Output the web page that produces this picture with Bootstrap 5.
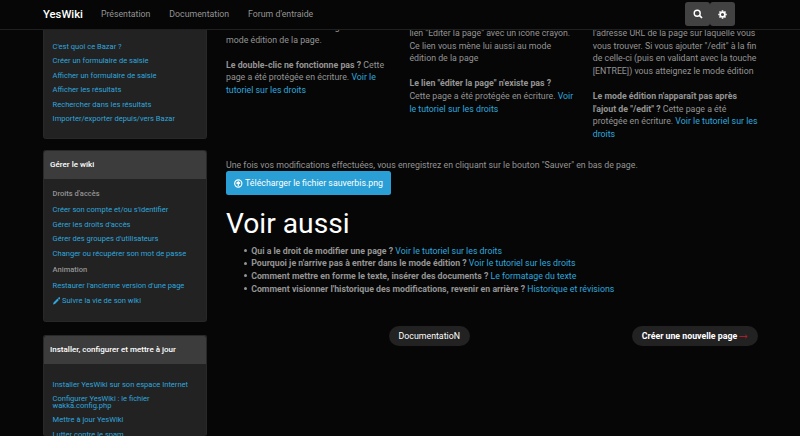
<!DOCTYPE html>
<html lang="fr" data-bs-theme="dark">
<head>
<meta charset="utf-8">
<meta name="viewport" content="width=device-width, initial-scale=1">
<title>YesWiki</title>
<link href="https://cdn.jsdelivr.net/npm/bootstrap@5.3.0/dist/css/bootstrap.min.css" rel="stylesheet">
<style>
html,body{height:100%;overflow:hidden}
body{background:#060606;color:#949494;font-family:Roboto,"Liberation Sans",sans-serif;font-size:8.79px;line-height:12.56px}
a{color:#2fa6dd;text-decoration:none}
p{margin:0 0 12.56px;white-space:nowrap}
.topbar{height:30px;background:#060606;border-bottom:1px solid #202020;padding:0 0 1px 43px;--bs-navbar-padding-y:0}
.topbar .navbar-brand{font-size:11.3px;font-weight:500;line-height:14px;color:#fff;margin:0;padding:1px 0 0;width:57.9px}
.topbar .navbar-nav{gap:19px}
.topbar .navbar-nav .nav-link{padding:0;color:#949494;line-height:14px;font-size:8.75px}
.tools{position:absolute;left:685px;top:2px}
.tools .btn{width:25px;height:24px;padding:0;background:#424242;border:0;border-radius:3px}
.page{height:436px;overflow:hidden;padding-left:43px}
.side{width:164.4px;flex:none}
.box{background:#222;border:1px solid #282828;border-radius:2.5px;line-height:7.2px;font-size:7.54px;flex:none}
.box-bazar{height:139px;margin-bottom:11px}
.box-wiki{height:172px;margin-bottom:13px}
.box-install{height:101px;border-bottom:0;overflow:hidden}
.box .card-header{background:#3c3c3c;border:0;color:#fff;height:28px;padding:0 6px;font-size:8.02px;font-weight:500;border-radius:2px 2px 0 0;flex:none}
.box .card-body{padding:0 8.6px;white-space:nowrap}
.box-bazar .card-body{padding-top:42px}
.box-wiki .card-body{padding-top:11.4px}
.box-install .card-body{padding-top:16.5px}
.box a{display:block;margin-bottom:7.2px}
.box h6{font-size:7.54px;line-height:8px;color:#949494;font-weight:500;margin:0}
.box .second{padding-top:2px}
.box .feed{margin-top:8px}
.main{width:532px;margin-left:18.6px;padding-top:27.2px;flex:none}
.ways{height:131.4px}
.way{width:183.4px;flex:none}
.way-first{margin-top:-6.2px}
.voir{font-size:28.2px;font-weight:400;line-height:34px;color:#fff;margin:11.6px 0 0}
.dl,.dl:hover{background:#2a9fd6;color:#fff}
.dl{font-size:8.79px;line-height:12.56px;width:165px;height:24px;padding:0 8px;border:0;border-radius:2.5px;white-space:nowrap;gap:2.5px}
.links{margin:4.2px 0 0;padding-left:17.6px;white-space:nowrap;list-style:none}
.links li::before{content:"";display:inline-block;width:3px;height:3px;border-radius:50%;background:#949494;margin-right:4.6px;vertical-align:1.6px}
.pager{margin:30.4px 0 0 163px}
.pill{background:#222;color:#fff;height:20.4px;padding:1px 9.6px 0;font-size:8.79px;white-space:nowrap}
</style>
<script src="https://cdn.jsdelivr.net/npm/bootstrap@5.3.0/dist/js/bootstrap.bundle.min.js"></script>
</head>
<body>
<nav class="topbar navbar navbar-expand fixed-top">
  <a class="navbar-brand" href="#">YesWiki</a>
  <div class="navbar-nav">
    <a class="nav-link" href="#">Présentation</a>
    <a class="nav-link" href="#">Documentation</a>
    <a class="nav-link" href="#">Forum d'entraide</a>
  </div>
  <div class="tools d-flex">
    <button class="btn d-flex align-items-center justify-content-center" aria-label="Rechercher"><svg width="10" height="10" viewBox="0 0 10 10" fill="none" stroke="#fff" stroke-width="1.4"><circle cx="4.2" cy="4.2" r="3"/><path d="M6.4 6.4 9 9" stroke-width="1.7"/></svg></button>
    <button class="btn d-flex align-items-center justify-content-center" aria-label="Paramètres"><svg width="9" height="9" viewBox="0 0 9 9" fill="none" stroke="#fff"><circle cx="4.5" cy="4.5" r="2.4" stroke-width="1.7"/><path d="M4.5 .3v1.4M4.5 7.3v1.4M.3 4.5h1.4M7.3 4.5h1.4M1.5 1.5l1 1M6.5 6.5l1 1M7.5 1.5l-1 1M2.5 6.5l-1 1" stroke-width="1.6"/></svg></button>
  </div>
</nav>
<div class="page d-flex">
  <aside class="side d-flex flex-column">
    <div class="box box-bazar card">
      <div class="card-body">
        <a href="#">C'est quoi ce Bazar ?</a><a href="#">Créer un formulaire de saisie</a><a href="#">Afficher un formulaire de saisie</a><a href="#">Afficher les résultats</a><a href="#">Rechercher dans les résultats</a><a href="#">Importer/exporter depuis/vers Bazar</a>
      </div>
    </div>
    <div class="box box-wiki card">
      <div class="card-header d-flex align-items-center">Gérer le wiki</div>
      <div class="card-body">
        <h6 class="mb-2">Droits d'accès</h6>
        <a href="#">Créer son compte et/ou s'identifier</a><a href="#">Gérer les droits d'accès</a><a href="#">Gérer des groupes d'utilisateurs</a><a href="#">Changer ou récupérer son mot de passe</a>
        <h6 class="second mb-2">Animation</h6>
        <a href="#">Restaurer l'ancienne version d'une page</a>
        <a class="feed" href="#"><svg width="7.5" height="7.5" viewBox="0 0 8 8" fill="#2fa6dd"><path d="M0 8 .6 5.9 4.8 1.7 6.3 3.2 2.1 7.4ZM5.3 1.2 6.2.3Q6.6-.1 7 .3L7.7 1Q8.1 1.4 7.7 1.8L6.8 2.7Z"/></svg> Suivre la vie de son wiki</a>
      </div>
    </div>
    <div class="box box-install card">
      <div class="card-header d-flex align-items-center">Installer, configurer et mettre à jour</div>
      <div class="card-body">
        <a href="#">Installer YesWiki sur son espace Internet</a><a href="#">Configurer YesWiki : le fichier<br>wakka.config.php</a><a href="#">Mettre à jour YesWiki</a><a href="#">Lutter contre le spam</a>
      </div>
    </div>
  </aside>
  <main class="main">
    <div class="ways d-flex">
      <div class="way way-first">
        <p>Un double-clic à l'écran charge le<br>mode édition de la page.</p>
        <p><b>Le double-clic ne fonctionne pas ?</b> Cette<br>page a été protégée en écriture. <a href="#">Voir le<br>tutoriel sur les droits</a></p>
      </div>
      <div class="way">
        <p>lien "Editer la page" avec un icône crayon.<br>Ce lien vous mène lui aussi au mode<br>édition de la page</p>
        <p><b>Le lien "éditer la page" n'existe pas ?</b><br>Cette page a été protégée en écriture. <a href="#">Voir<br>le tutoriel sur les droits</a></p>
      </div>
      <div>
        <p>l'adresse URL de la page sur laquelle vous<br>vous trouver. Si vous ajouter "/edit" à la fin<br>de celle-ci (puis en validant avec la touche<br>[ENTREE]) vous atteignez le mode édition</p>
        <p><b>Le mode édition n'apparaît pas après<br>l'ajout de "/edit" ?</b> Cette page a été<br>protégée en écriture. <a href="#">Voir le tutoriel sur les<br>droits</a></p>
      </div>
    </div>
    <div class="text-nowrap">Une fois vos modifications effectuées, vous enregistrez en cliquant sur le bouton "Sauver" en bas de page.</div>
    <a class="dl btn d-flex align-items-center" href="#"><svg width="9" height="9" viewBox="0 0 9 9" fill="none" stroke="#fff" stroke-width="1.2"><circle cx="4.5" cy="4.5" r="3.8"/><path d="M4.5 7V2.8M2.6 4.5 4.5 2.6 6.4 4.5"/></svg><span>Télécharger le fichier sauverbis.png</span></a>
    <h1 class="voir">Voir aussi</h1>
    <ul class="links">
      <li><b>Qui a le droit de modifier une page ?</b> <a href="#">Voir le tutoriel sur les droits</a></li>
      <li><b>Pourquoi je n'arrive pas à entrer dans le mode édition ?</b> <a href="#">Voir le tutoriel sur les droits</a></li>
      <li><b>Comment mettre en forme le texte, insérer des documents ?</b> <a href="#">Le formatage du texte</a></li>
      <li><b>Comment visionner l'historique des modifications, revenir en arrière ?</b> <a href="#">Historique et révisions</a></li>
    </ul>
    <div class="pager d-flex justify-content-between">
      <a class="pill rounded-pill d-flex align-items-center" href="#">DocumentatioN</a>
      <a class="pill rounded-pill d-flex align-items-center fw-bold" href="#">Créer une nouvelle page&nbsp;<svg width="9" height="5" viewBox="0 0 9 5" fill="none" stroke="#b5202a" stroke-width=".9"><path d="M.3 2.5h7.8M6.3.9 8.2 2.5 6.3 4.1"/></svg></a>
    </div>
  </main>
</div>
</body>
</html>
